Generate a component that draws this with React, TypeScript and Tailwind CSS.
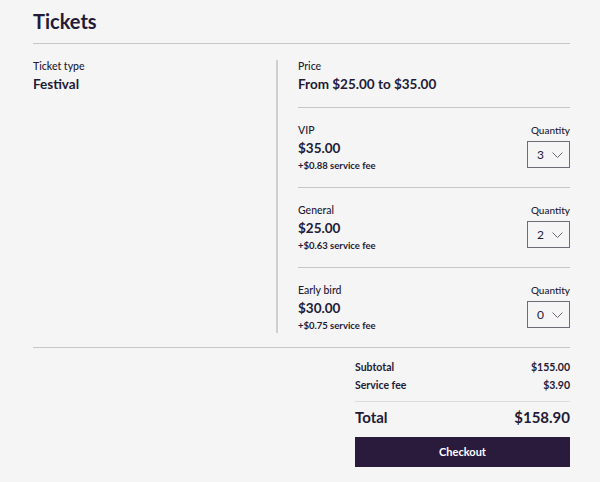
import React from "react";

const items = [
  { name: "VIP", price: "$35.00", fee: "+$0.88 service fee", qty: 3 },
  { name: "General", price: "$25.00", fee: "+$0.63 service fee", qty: 2 },
  { name: "Early bird", price: "$30.00", fee: "+$0.75 service fee", qty: 0 },
];

const Chevron = () => (
  <svg width="11" height="6" viewBox="0 0 11 6" fill="none">
    <polyline points="0.5,0.5 5.5,5.5 10.5,0.5" stroke="#6b6475" strokeWidth="1" />
  </svg>
);

const QtySelect = ({ value }: { value: number }) => (
  <div className="flex flex-col items-end">
    <div className="text-[10px] leading-[14px] font-medium">Quantity</div>
    <div className="mt-[4px] flex h-[27px] w-[43px] items-center justify-between border border-[#6f6a77] pl-[9px] pr-[6px]">
      <span className="text-[12px]">{value}</span>
      <Chevron />
    </div>
  </div>
);

export default function App() {
  return (
    <div
      className="min-h-[482px] w-[600px] bg-[#f5f5f5] pl-[33px] pr-[30px] text-[#231a35]"
      style={{ fontFamily: "Lato, 'Open Sans', sans-serif" }}
    >
      <div className="pt-[7px] pb-[8px] text-[20px] leading-[28px] font-bold">Tickets</div>
      <div className="h-[1px] bg-[#c6c6c8]" />

      <div className="flex pt-[16px] pb-[14px]">
        <div className="w-[245px] border-r-2 border-[#cfcfd1]">
          <div className="text-[10.5px] leading-[13px] font-medium">Ticket type</div>
          <div className="mt-[1px] text-[13.5px] leading-[20px] font-bold">Festival</div>
        </div>
        <div className="flex-1 pl-[20px]">
          <div className="border-b border-[#c6c6c8] pb-[13px]">
            <div className="text-[10.5px] leading-[13px] font-medium">Price</div>
            <div className="mt-[1px] text-[13.5px] leading-[20px] font-bold">From $25.00 to $35.00</div>
          </div>
          {items.map((it, i) => (
            <div
              key={it.name}
              className={
                i < items.length - 1
                  ? "flex items-start justify-between border-b border-[#c6c6c8] pt-[15px] pb-[14px]"
                  : "flex items-start justify-between pt-[15px]"
              }
            >
              <div>
                <div className="text-[10.5px] leading-[14px] font-medium">{it.name}</div>
                <div className="mt-[1px] text-[13.5px] leading-[20px] font-bold">{it.price}</div>
                <div className="mt-[1px] text-[9.5px] leading-[14px] font-bold">{it.fee}</div>
              </div>
              <QtySelect value={it.qty} />
            </div>
          ))}
        </div>
      </div>

      <div className="h-[1px] bg-[#c6c6c8]" />

      <div className="flex justify-end">
        <div className="w-[215px] pt-[12px]">
          <div className="flex justify-between text-[10.5px] leading-[14px] font-bold">
            <span>Subtotal</span>
            <span>$155.00</span>
          </div>
          <div className="mt-[4px] flex justify-between text-[10.5px] leading-[14px] font-bold">
            <span>Service fee</span>
            <span>$3.90</span>
          </div>
          <div className="mt-[9px] h-[1px] bg-[#dcdcde]" />
          <div className="mt-[4px] flex justify-between text-[15px] leading-[22px] font-bold">
            <span>Total</span>
            <span>$158.90</span>
          </div>
          <button className="mt-[9px] flex h-[30px] w-full items-center justify-center bg-[#2a1a3b] text-[11px] font-bold text-white">
            Checkout
          </button>
        </div>
      </div>
    </div>
  );
}
